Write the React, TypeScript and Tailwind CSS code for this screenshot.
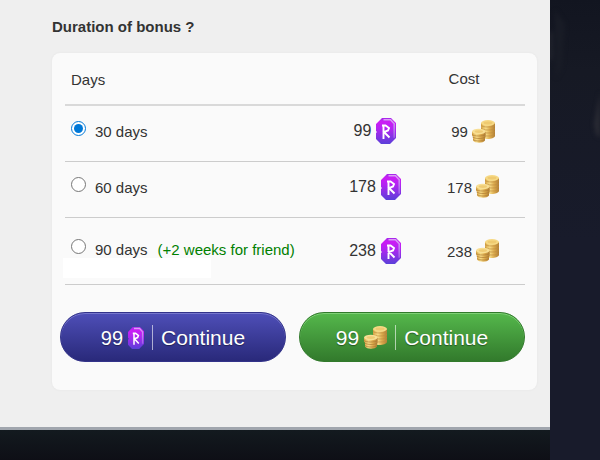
import { useState } from "react";

type Plan = {
  days: number;
  price: number;
  note?: string;
};

const PLANS: Plan[] = [
  { days: 30, price: 99 },
  { days: 60, price: 178 },
  { days: 90, price: 238, note: "(+2 weeks for friend)" },
];

function RuneIcon({ className }: { className?: string }) {
  return (
    <svg viewBox="0 0 20 26" aria-hidden preserveAspectRatio="none" className={className}>
      <defs>
        <linearGradient id="rune-body" x1="0" y1="0" x2="0" y2="1">
          <stop offset="0" stopColor="#a32bea" />
          <stop offset="0.15" stopColor="#cc1cf5" />
          <stop offset="0.4" stopColor="#b424f2" />
          <stop offset="1" stopColor="#5a40d8" />
        </linearGradient>
        <linearGradient id="rune-edge" x1="0" y1="0" x2="0" y2="1">
          <stop offset="0" stopColor="#dc9cf7" />
          <stop offset="1" stopColor="#a15ee8" />
        </linearGradient>
      </defs>
      <path d="M6 0h9l5 5v15l-4 4-2 2H5l-5-5v-6l1-1-1-1V6z" fill="url(#rune-body)" />
      <path d="M7.500 1.800h7l3.700 4v14" fill="none" stroke="url(#rune-edge)" strokeWidth="1.600" />
      <path
        d="M7.500 6.500v14.500M6 7.500h3.500l3.500 2.500-1 2.500-4 1.500 5.500 5.500"
        fill="none"
        stroke="#fff"
        strokeWidth="1.900"
      />
    </svg>
  );
}

function CoinsIcon({ className }: { className?: string }) {
  return (
    <svg viewBox="0 0 23 23" aria-hidden className={className}>
      <defs>
        <linearGradient id="coin-side" x1="0" y1="0" x2="1" y2="0">
          <stop offset="0" stopColor="#d6a344" />
          <stop offset="0.35" stopColor="#f7dc88" />
          <stop offset="0.65" stopColor="#dcab4c" />
          <stop offset="1" stopColor="#b07e35" />
        </linearGradient>
      </defs>
      <path d="M9 3v13c0 4 13 4 14 0V3z" fill="url(#coin-side)" />
      <path
        d="M9 5.500c2 2 12 2 14 0M9 8.500c2 2 12 2 14 0M9 11.500c2 2 12 2 14 0M9 14.500c2 2 12 2 14 0"
        fill="none"
        stroke="#c08e40"
        strokeWidth="0.700"
      />
      <ellipse cx="16" cy="3" rx="7" ry="2.900" fill="#f6d985" />
      <ellipse cx="16" cy="3" rx="4.500" ry="1.400" fill="#efca70" />
      <path d="M0 11.500v4l1 1v4c2 3 10 3 12 0v-3l.5-1v-5z" fill="url(#coin-side)" />
      <path
        d="M0 14.500c2 2 11 2 13.500 0M.5 17c3 2 10 2 13 0M1 19.500c2 2 10 2 12 0"
        fill="none"
        stroke="#ad7a34"
        strokeWidth="0.700"
      />
      <ellipse cx="6.800" cy="11.500" rx="6.800" ry="2.800" fill="#f8df94" />
      <ellipse cx="6.800" cy="11.600" rx="4.200" ry="1.300" fill="#efcb74" />
    </svg>
  );
}

function Backdrop() {
  return (
    <svg viewBox="0 0 50 240" aria-hidden className="h-60 w-full">
      <defs>
        <linearGradient id="night" x1="0" y1="0" x2="0" y2="1">
          <stop offset="0" stopColor="#121520" />
          <stop offset="0.3" stopColor="#161924" />
          <stop offset="1" stopColor="#181b2b" />
        </linearGradient>
        <filter id="smoke" x="-1" y="-1" width="3" height="3" colorInterpolationFilters="sRGB">
          <feGaussianBlur stdDeviation="2" />
        </filter>
      </defs>
      <path d="M0 0h50v240H0z" fill="url(#night)" />
      <g filter="url(#smoke)">
        <path d="M0 30l2 4v24l-2 4z" fill="#2b2d35" />
        <path d="M5 10l10 14-3 44-6 10z" fill="#191c26" />
        <path d="M50 92l-6 32 2 10 4 4z" fill="#2a2b34" />
      </g>
    </svg>
  );
}

export default function App() {
  const [selected, setSelected] = useState(30);
  const price = PLANS.find((p) => p.days === selected)?.price ?? 0;

  return (
    <div className="flex min-h-screen bg-[#181b2b] font-['Liberation_Sans',Arial,sans-serif] text-[15px] text-[#333]">
      <div className="flex min-w-0 flex-1 flex-col">
        <main className="flex-1 border-b-[3px] border-[#a0a5ad] bg-[#efefef] pt-4 pr-[13px] pb-[37px] pl-[52px]">
          <h1 className="pb-[15px] leading-[22px] font-bold">Duration of bonus ?</h1>

          <form
            className="rounded-lg bg-[#fafafa] pb-7 shadow-[0_0_2px_#e2e2e2]"
            onSubmit={(e) => e.preventDefault()}
          >
            <div className="pr-3 pl-[13px]">
              <table className="w-full table-fixed border-collapse">
                <thead>
                  <tr className="h-[52px] border-b-2 border-[#d9d9d9] text-left">
                    <th className="pt-1 pl-1.5 font-normal">Days</th>
                    <th className="w-[100px]" aria-label="Runes" />
                    <th className="w-[100px] pt-0.5 pr-[22px] text-center font-normal">Cost</th>
                  </tr>
                </thead>
                <tbody>
                  {PLANS.map((plan) => (
                    <tr
                      key={plan.days}
                      className={`border-b border-[#ccc] align-top ${plan.note ? "h-[67px]" : "h-14"}`}
                    >
                      <td className={plan.note ? "pt-[21px]" : "pt-[15px]"}>
                        <label className="flex items-start pl-1.5">
                          <input
                            type="radio"
                            name="duration"
                            checked={selected === plan.days}
                            onChange={() => setSelected(plan.days)}
                            className="mr-[9px] size-[15px] shrink-0 accent-[#0078d7]"
                          />
                          <span className="pt-[3px] leading-4">{plan.days} days</span>
                          {plan.note && (
                            <span className="pt-[3px] pl-2.5 leading-4 text-[#008000]">
                              {plan.note}
                            </span>
                          )}
                        </label>
                        {plan.note && <div className="-ml-0.5 h-5 w-[148px] bg-white" />}
                      </td>
                      <td className={plan.note ? "pt-5" : "pt-3"}>
                        <div className="flex items-center justify-center gap-[5px] text-base leading-[26px]">
                          {plan.price}
                          <RuneIcon className="h-[26px] w-5" />
                        </div>
                      </td>
                      <td className={plan.note ? "pt-[22px]" : "pt-3.5"}>
                        <div className="flex h-6 items-center justify-center gap-1 pr-1 leading-6">
                          {plan.price}
                          <CoinsIcon className="mb-0.5 size-[23px]" />
                        </div>
                      </td>
                    </tr>
                  ))}
                </tbody>
              </table>
            </div>

            <div className="flex gap-[13px] pt-[27px] pr-3 pl-2">
              <button
                type="submit"
                className="flex h-[50px] flex-1 items-center justify-center rounded-full border border-[#33338a] bg-linear-to-b from-[#4f4fb8] to-[#29297a] pt-0.5 text-xl text-white shadow-[inset_0_1px_0_#7777cc] text-shadow-[0_1px_1px_rgb(0_0_0/0.4)]"
              >
                {price}
                <RuneIcon className="ml-[5px] h-[22px] w-4" />
                <span className="mx-2 h-[25px] w-px bg-white/60" />
                <span className="text-[21px]">Continue</span>
              </button>
              <button
                type="submit"
                className="flex h-[50px] flex-1 items-center justify-center rounded-full border border-[#327a2c] bg-linear-to-b from-[#55b84c] to-[#327a2c] pt-0.5 text-[21px] text-white shadow-[inset_0_1px_0_#7fd077] text-shadow-[0_1px_1px_rgb(0_0_0/0.4)]"
              >
                {price}
                <CoinsIcon className="ml-[5px] size-[23px]" />
                <span className="mx-2 h-[25px] w-px bg-white/60" />
                <span>Continue</span>
              </button>
            </div>
          </form>
        </main>
        <footer className="h-[30px] bg-linear-to-b from-[#131a1f] to-[#0e0f16]" />
      </div>
      <aside className="w-[50px] shrink-0">
        <Backdrop />
      </aside>
    </div>
  );
}
